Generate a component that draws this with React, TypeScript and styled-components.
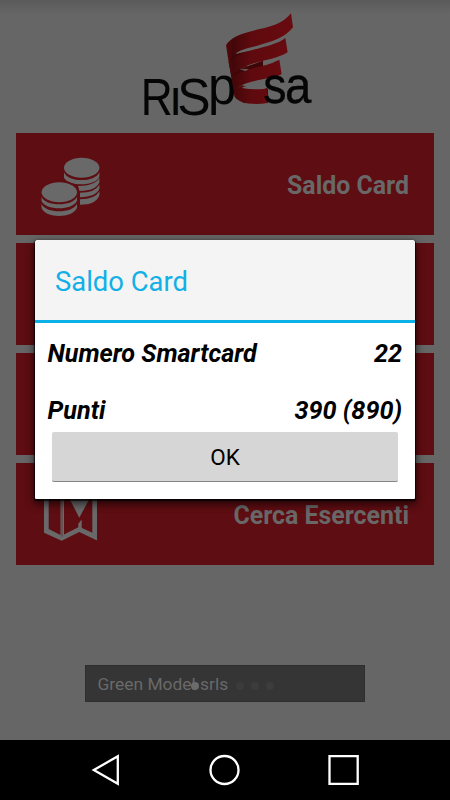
import React from 'react';
import styled, { createGlobalStyle } from 'styled-components';

const GlobalStyle = createGlobalStyle`
  * { box-sizing: border-box; }
  body { margin: 0; font-family: Roboto, "Liberation Sans", sans-serif; background: #666; }
`;

const Screen = styled.div`
  position: relative;
  width: 450px;
  height: 800px;
  display: flex;
  flex-direction: column;
  overflow: hidden;
  background: linear-gradient(#5a5a5a, #666 14px);
`;

const Page = styled.main`
  height: 740px;
  display: flex;
  flex-direction: column;
  align-items: center;
`;

const Logo = styled.svg`
  flex: none;
  width: 200px;
  height: 130px;
  margin-left: 10px;
  font-family: "Liberation Sans", sans-serif;
`;

const Menu = styled.div`
  display: flex;
  flex-direction: column;
  gap: 7.8px;
  width: 418px;
  margin-top: 2.8px;
`;

const MenuItem = styled.div`
  display: flex;
  align-items: center;
  justify-content: space-between;
  height: 102.2px;
  padding: 1px 25px 0 24px;
  background: #5e0d12;
  color: #686868;
  font-size: 24.9px;
  font-weight: 700;
`;

const MenuLabel = styled.span`
  padding-top: 2px;
`;

const MenuIcon = styled.svg`
  width: 64px;
  height: 64px;
`;

const Toast = styled.div`
  position: relative;
  width: 280px;
  height: 37px;
  margin-top: 100.2px;
  padding-left: 11.5px;
  background: #353535;
  border: 1px solid #2e2e2e;
  color: #696969;
  font-size: 17.4px;
  line-height: 36px;
`;

const PageDots = styled.div`
  position: absolute;
  left: 105px;
  top: 16px;
  display: flex;
  gap: 7px;
`;

const Dot = styled.span<{ $tone: string }>`
  width: 8px;
  height: 8px;
  border-radius: 50%;
  background: ${(p) => p.$tone};
`;

const Dialog = styled.section`
  position: absolute;
  left: 35px;
  top: 240px;
  width: 380px;
  height: 259px;
  background: #fff;
  border-radius: 3px 3px 1px 1px;
  box-shadow: 0 1px 1px 0.5px rgba(0, 0, 0, 0.7), 0 4px 9px 1px rgba(0, 0, 0, 0.65);
`;

const DialogTitle = styled.h1`
  margin: 0;
  height: 83px;
  padding-left: 20px;
  background: #f4f4f4;
  border-bottom: 3px solid #0bb0e6;
  border-radius: 3px 3px 0 0;
  color: #12b0e6;
  font-size: 27.4px;
  font-weight: 400;
  line-height: 84px;
`;

const DataRow = styled.div`
  display: flex;
  justify-content: space-between;
  height: 57px;
  padding: 0 13px 0 12.5px;
  color: #000;
  font-size: 25.2px;
  font-style: italic;
  font-weight: 700;
  line-height: 61px;
`;

const OkButton = styled.button`
  position: absolute;
  left: 17px;
  top: 192px;
  width: 346px;
  height: 50px;
  border: 0;
  border-bottom: 1px solid #858585;
  border-radius: 2px;
  background: #d6d6d6;
  color: #000;
  font: 400 22.5px/48px Roboto, sans-serif;
  padding: 0;
`;

const NavBar = styled.nav`
  display: flex;
  justify-content: space-between;
  align-items: center;
  height: 60px;
  padding: 0 90px;
  background: #000;
`;

const NavIcon = styled.svg`
  width: 32px;
  height: 32px;
  fill: none;
  stroke: #fff;
  stroke-width: 2.3;
`;

const BrandLogo = () => (
  <Logo viewBox="0 0 600 390">
    <defs>
      <linearGradient id="ribbon" x1="288" x2="490" y1="0" y2="0" gradientUnits="userSpaceOnUse">
        <stop offset="0" stopColor="#55090c" />
        <stop offset="0.1" stopColor="#430709" />
        <stop offset="0.38" stopColor="#5f0a0e" />
        <stop offset="1" stopColor="#690b10" />
      </linearGradient>
    </defs>
    <g fill="#050505" fontSize="157">
      <text x="32" y="345" textLength="96" lengthAdjust="spacingAndGlyphs">R</text>
      <text x="124" y="345" fontSize="154" fontWeight="700" textLength="26" lengthAdjust="spacingAndGlyphs">ı</text>
      <text x="142" y="345" textLength="100" lengthAdjust="spacingAndGlyphs">S</text>
      <text x="234" y="312" textLength="85" lengthAdjust="spacingAndGlyphs">p</text>
    </g>
    <path fill="#430709" d="M296 187 320 160 360 153 349 200 300 200Z M304 230 332 206 399 182V205L340 240 310 258Z M336 258Q370 267 409 264L414 267V309H340Z" />
    <g fill="url(#ribbon)">
      <path d="M288 136C300 113 334 99 386 88C435 78 462 66 483 40L489 82C463 115 425 125 382 137C350 145 330 150 318 160L330 162 349 200 330 206 340 225 315 258 304 230 296 187Z" />
      <path d="M296 187C312 164 349 154 393 143C430 134 451 125 466 114L473 157C440 177 407 179 365 192C335 203 316 213 304 230Z" />
      <path d="M304 230C318 211 352 209 387 200C420 193 435 185 448 179L455 223C424 237 374 239 338 254C323 261 315 274 314 290Z" />
      <path d="M314 290C310 273 321 262 339 255C345 267 376 268 411 266L414 309C362 316 326 309 314 290Z" />
    </g>
    <path fill="#3f0608" d="M297 187Q306 170 319 160L334 162Q311 172 297 187Z M305 230Q315 216 330 208L349 212Q317 219 305 230Z M350 201 399 185V195L360 207Z" />
    <path fill="#666" d="M317 160C348 151 427 138 463 112L461 117C430 135 372 147 340 155L322 161Z M329 208 356 207 346 213Z M399 183 446 173V179L399 194Z M336 260Q374 263 409 258L406 266Q369 270 340 265Z" />
    <g fill="#050505" stroke="#050505" strokeWidth="1" fontSize="154">
      <text x="400" y="309" textLength="70" lengthAdjust="spacingAndGlyphs">s</text>
      <text x="465" y="309" textLength="79" lengthAdjust="spacingAndGlyphs">a</text>
    </g>
  </Logo>
);

const CoinsIcon = () => (
  <MenuIcon viewBox="0 -0.7 64 64">
    <g fill="#696969">
      <ellipse cx="41.7" cy="15" rx="17.7" ry="10" />
      <path d="M24 19.5C28 30 55 30 59.4 19.5V23.5C57 33.5 29 34.5 24 25Z" />
      <path d="M38 33.3Q55 33 59.4 25V29.5Q56 38 39.5 38.2Z" />
      <path d="M40 40Q55 40 59.4 32V36Q56 44 40 44.5Z" />
      <path d="M40 46.5Q55 46.5 59.4 38.5V42.5Q56 52 40 52Z" />
      <ellipse cx="19" cy="40" rx="20.5" ry="12.5" fill="#5e0d12" />
      <ellipse cx="19.3" cy="39.5" rx="17.7" ry="10" />
      <path d="M1.5 44C5 54 33 54 37 44V48C33 58 5 58 1.5 48Z" />
      <path d="M1.5 51C5 61 33 61 37 51V55C33 66 5 66 1.5 55Z" />
    </g>
  </MenuIcon>
);

const MapIcon = () => (
  <MenuIcon viewBox="0 -0.7 64 64">
    <g fill="#696969">
      <path fillRule="evenodd" d="M4 6 21.7 14 39.3 6 57 14V57.7L39.3 49.2 21.7 58 4 50ZM8.7 12V46.4L20.5 52.4V17ZM24 17V51.7L39.3 44 52.3 50V17L39.3 11Z" />
      <path d="M30 12H49V17L39.3 35 30 17Z" />
      <path d="M38.3 46V41L41.7 36.7V46Z" />
    </g>
    <path d="M22 16V54" stroke="#5e0d12" strokeWidth="0.5" />
  </MenuIcon>
);

const menuItems = [
  { label: 'Saldo Card', icon: <CoinsIcon /> },
  { label: '', icon: null },
  { label: '', icon: null },
  { label: 'Cerca Esercenti', icon: <MapIcon /> },
];

const balance = [
  { label: 'Numero Smartcard', value: '22' },
  { label: 'Punti', value: '390 (890)' },
];

const dotTones = ['#6b6b6b', 'transparent', 'transparent', '#3c3c3c', '#3c3c3c', '#3c3c3c'];

export default function App() {
  return (
    <Screen>
      <GlobalStyle />
      <Page>
        <BrandLogo />
        <Menu>
          {menuItems.map((item, i) => (
            <MenuItem key={i}>
              {item.icon}
              <MenuLabel>{item.label}</MenuLabel>
            </MenuItem>
          ))}
        </Menu>
        <Toast>
          Green Model srls
          <PageDots>
            {dotTones.map((tone, i) => (
              <Dot key={i} $tone={tone} />
            ))}
          </PageDots>
        </Toast>
      </Page>
      <NavBar>
        <NavIcon viewBox="0 0 32 32"><path d="M3.8 16 27.8 2.3V29.7Z" /></NavIcon>
        <NavIcon viewBox="0 0 32 32"><circle cx="15.5" cy="16" r="14" /></NavIcon>
        <NavIcon viewBox="0 0 32 32"><path d="M1.5 2.2H29.7V29.8H1.5Z" /></NavIcon>
      </NavBar>
      <Dialog role="dialog">
        <DialogTitle>Saldo Card</DialogTitle>
        {balance.map((row) => (
          <DataRow key={row.label}>
            <span>{row.label}</span>
            <span>{row.value}</span>
          </DataRow>
        ))}
        <OkButton>OK</OkButton>
      </Dialog>
    </Screen>
  );
}
